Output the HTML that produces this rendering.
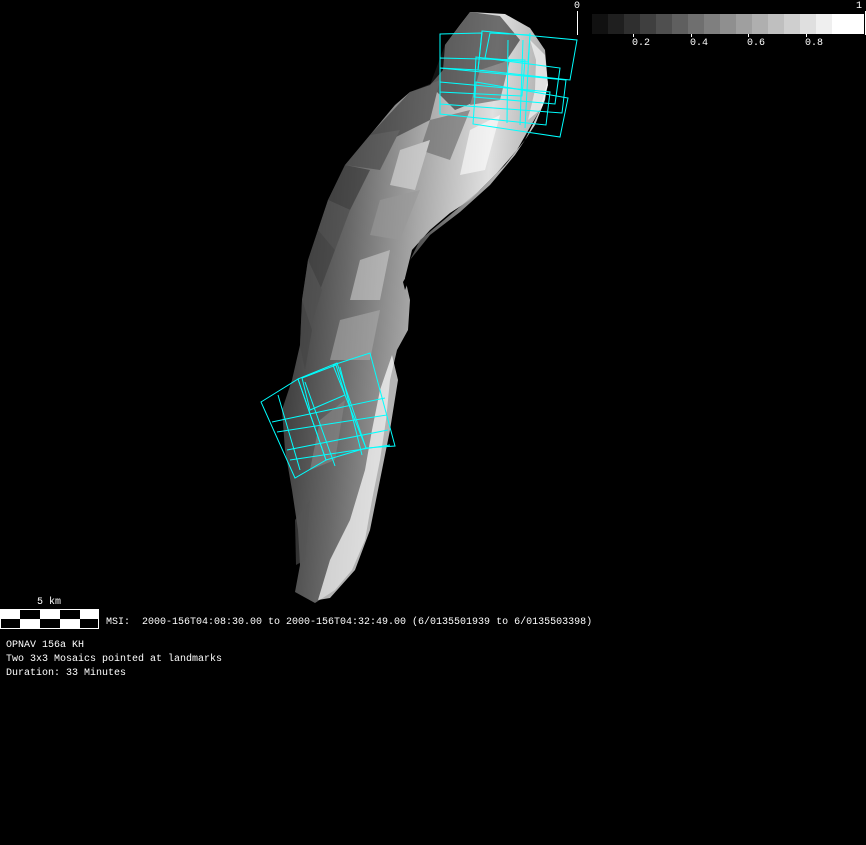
<!DOCTYPE html>
<html><head><style>
html,body{margin:0;padding:0;background:#000;}
body{width:866px;height:845px;position:relative;overflow:hidden;font-family:"Liberation Mono",monospace;font-size:10px;color:#fff;}
.t{position:absolute;white-space:pre;line-height:12px;}
</style></head><body>
<svg width="866" height="845" style="position:absolute;left:0;top:0">
<defs>
<linearGradient id="g" x1="0" y1="0" x2="1" y2="0.15">
<stop offset="0" stop-color="#2a2a2a"/>
<stop offset="0.3" stop-color="#686868"/>
<stop offset="0.55" stop-color="#a8a8a8"/>
<stop offset="0.8" stop-color="#e0e0e0"/>
<stop offset="1" stop-color="#aaa"/>
</linearGradient>
<linearGradient id="g2" x1="0" y1="0" x2="1" y2="0">
<stop offset="0" stop-color="#555"/>
<stop offset="0.5" stop-color="#bbb"/>
<stop offset="1" stop-color="#fff"/>
</linearGradient>
</defs>
<polygon fill="url(#g)" points="470,12 505,14 530,28 545,50 548,85 543,105 533,122 517,150 497,173 470,200 450,213 430,230 412,250 405,278 410,300 408,330 397,350 390,380 386,420 380,460 372,500 365,540 352,570 335,590 315,603 295,592 300,565 298,530 292,490 285,450 282,410 292,380 300,345 302,300 308,260 318,230 328,200 345,165 370,135 395,105 410,92 430,85 443,70 445,45 460,25"/>
<g opacity="0.6">
<polygon fill="#222" points="445,45 470,12 500,16 520,40 500,70 480,100 455,110 430,85"/>
<polygon fill="#333" points="410,92 440,80 430,120 390,140 370,135"/>
<polygon fill="#444" points="370,135 400,130 380,170 345,165"/>
<polygon fill="#333" points="345,165 370,170 350,210 328,200"/>
<polygon fill="#4a4a4a" points="328,200 350,210 335,250 318,230"/>
<polygon fill="#3d3d3d" points="318,230 335,250 320,290 308,260"/>
<polygon fill="#505050" points="308,260 322,290 310,330 302,300"/>
<polygon fill="#444" points="302,300 312,330 305,370 300,345"/>
<polygon fill="#666" points="430,120 470,110 450,160 420,150"/>
<polygon fill="#999" points="380,200 420,190 400,240 370,235"/>
<polygon fill="#ccc" points="360,260 390,250 380,300 350,300"/>
<polygon fill="#aaa" points="340,320 380,310 370,360 330,360"/>
<polygon fill="#555" points="480,70 510,60 500,100 470,105"/>
<polygon fill="#fff" points="470,130 500,115 485,170 460,175"/>
<polygon fill="#ddd" points="400,150 430,140 415,190 390,185"/>
<polygon fill="#888" points="320,420 345,400 335,460 310,470"/>
<polygon fill="#555" points="295,520 310,500 305,560 296,565"/>
</g>
<polygon fill="#eee" opacity="0.8" points="530,40 545,55 548,85 540,110 528,120 535,90 536,60"/>
<polygon fill="url(#g2)" opacity="0.85" points="420,240 450,215 480,190 505,165 525,140 540,110 548,80 545,100 535,125 515,155 490,185 460,212 430,235 410,260"/>
<polygon fill="#fff" opacity="0.7" points="330,560 350,520 365,470 372,430 380,390 392,355 398,380 390,430 380,480 370,530 355,570 330,598 318,600"/>
<polygon fill="#000" points="403,282 410,270 418,258 412,272 405,290"/>
<g fill="none" stroke="#0ff" stroke-width="1">
<polygon points="440,34 482,33 478,70 440,68"/>
<polygon points="482,31 577,40 570,80 478,70"/>
<polygon points="440,58 525,60 522,96 440,92"/>
<polygon points="476,57 560,68 555,104 474,97"/>
<polygon points="440,68 566,80 562,113 440,104"/>
<polygon points="440,82 550,92 546,125 440,114"/>
<polygon points="476,82 568,98 560,137 473,124"/>
<polygon points="485,58 490,33 530,35 528,62"/>
<line x1="508" y1="40" x2="507" y2="123"/>
<line x1="523" y1="40" x2="520" y2="125"/>
<line x1="530" y1="33" x2="525" y2="128"/>
</g>
<g fill="none" stroke="#0ff" stroke-width="1">
<polygon points="261,402 298,379 326,460 295,478"/>
<polygon points="298,379 337,363 366,448 326,460"/>
<polygon points="333,365 370,353 395,446 366,448"/>
<polygon points="302,378 336,365 345,395 310,410 "/>
<line x1="272" y1="422" x2="385" y2="398"/>
<line x1="277" y1="432" x2="387" y2="415"/>
<line x1="287" y1="450" x2="388" y2="430"/>
<line x1="290" y1="460" x2="390" y2="445"/>
<line x1="305" y1="382" x2="335" y2="466"/>
<line x1="340" y1="367" x2="362" y2="455"/>
<line x1="278" y1="395" x2="300" y2="470"/>
</g>
<g>
<rect x="592" y="14" width="17" height="20" fill="#111"/>
<rect x="608" y="14" width="17" height="20" fill="#1f1f1f"/>
<rect x="624" y="14" width="17" height="20" fill="#2f2f2f"/>
<rect x="640" y="14" width="17" height="20" fill="#3f3f3f"/>
<rect x="656" y="14" width="17" height="20" fill="#4f4f4f"/>
<rect x="672" y="14" width="17" height="20" fill="#5f5f5f"/>
<rect x="688" y="14" width="17" height="20" fill="#6f6f6f"/>
<rect x="704" y="14" width="17" height="20" fill="#7f7f7f"/>
<rect x="720" y="14" width="17" height="20" fill="#8f8f8f"/>
<rect x="736" y="14" width="17" height="20" fill="#9f9f9f"/>
<rect x="752" y="14" width="17" height="20" fill="#afafaf"/>
<rect x="768" y="14" width="17" height="20" fill="#bfbfbf"/>
<rect x="784" y="14" width="17" height="20" fill="#cfcfcf"/>
<rect x="800" y="14" width="17" height="20" fill="#dfdfdf"/>
<rect x="816" y="14" width="17" height="20" fill="#efefef"/>
<rect x="832" y="14" width="32" height="20" fill="#fff"/>
<line x1="577.5" y1="11" x2="577.5" y2="35" stroke="#fff"/>
<line x1="865.5" y1="11" x2="865.5" y2="35" stroke="#fff"/>
<line x1="633.5" y1="34" x2="633.5" y2="37" stroke="#fff"/>
<line x1="691.5" y1="34" x2="691.5" y2="37" stroke="#fff"/>
<line x1="748.5" y1="34" x2="748.5" y2="37" stroke="#fff"/>
<line x1="806.5" y1="34" x2="806.5" y2="37" stroke="#fff"/>
</g>
<rect x="0" y="609" width="99" height="20" fill="#fff"/>
<rect x="20" y="610" width="20" height="9" fill="#000"/>
<rect x="60" y="610" width="20" height="9" fill="#000"/>
<rect x="1" y="619" width="19" height="9" fill="#000"/>
<rect x="40" y="619" width="20" height="9" fill="#000"/>
<rect x="80" y="619" width="18" height="9" fill="#000"/>
</svg>
<div class="t" style="left:574px;top:1px">0</div>
<div class="t" style="left:856px;top:1px">1</div>
<div class="t" style="left:632px;top:38px">0.2</div>
<div class="t" style="left:690px;top:38px">0.4</div>
<div class="t" style="left:747px;top:38px">0.6</div>
<div class="t" style="left:805px;top:38px">0.8</div>
<div class="t" style="left:37px;top:597px">5 km</div>
<div class="t" style="left:106px;top:617px">MSI:  2000-156T04:08:30.00 to 2000-156T04:32:49.00 (6/0135501939 to 6/0135503398)</div>
<div class="t" style="left:6px;top:640px">OPNAV 156a KH</div>
<div class="t" style="left:6px;top:654px">Two 3x3 Mosaics pointed at landmarks</div>
<div class="t" style="left:6px;top:668px">Duration: 33 Minutes</div>
</body></html>
